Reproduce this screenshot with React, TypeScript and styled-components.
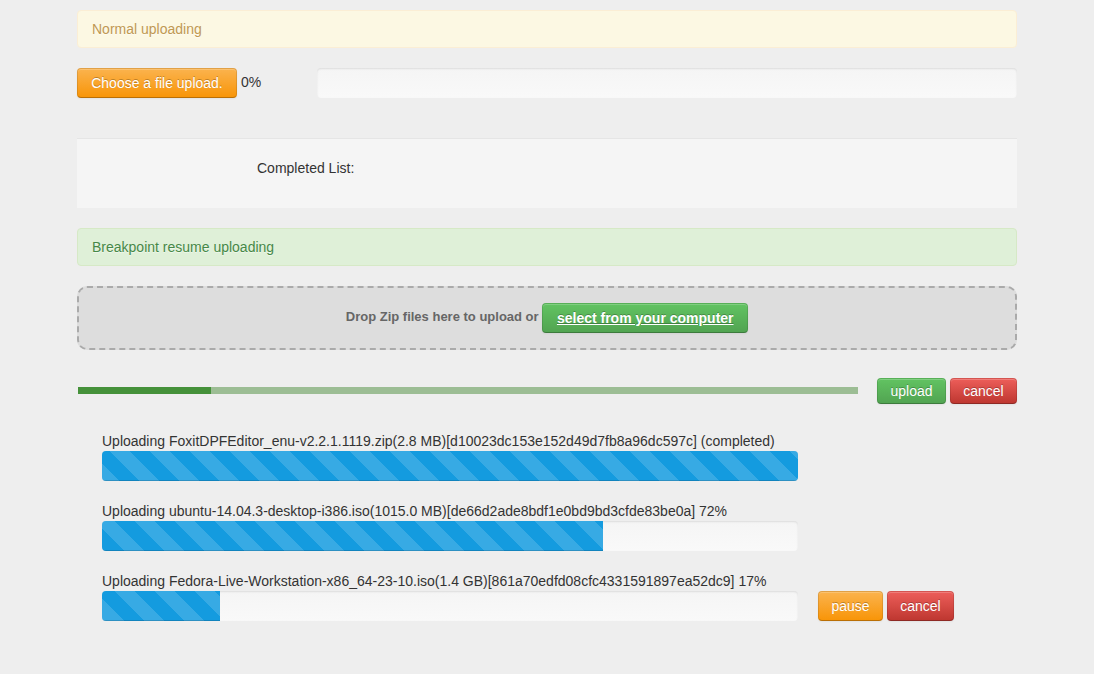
import React from "react";
import styled, { createGlobalStyle, css } from "styled-components";

const GlobalStyle = createGlobalStyle`
  *, *::before, *::after { box-sizing: border-box; }
  body {
    margin: 0;
    background: #eee;
    color: #333;
    font: 14px/20px "Liberation Sans", Arial, sans-serif;
  }
`;

const Page = styled.main`
  display: flex;
  flex-direction: column;
  gap: 20px;
  max-width: 980px;
  margin: 0 auto;
  padding: 10px 20px 20px;
`;

type Tone = "warning" | "success" | "danger";

const alertTones = {
  warning: css`
    color: #c09853;
    background: #fcf8e3;
    border-color: #fbeed5;
  `,
  success: css`
    color: #468847;
    background: #dff0d8;
    border-color: #d6e9c6;
  `,
};

const Alert = styled.div<{ $tone: "warning" | "success" }>`
  padding: 8px 14px;
  border: 1px solid;
  border-radius: 4px;
  text-shadow: 0 1px 0 rgba(255, 255, 255, 0.5);
  ${(p) => alertTones[p.$tone]}
`;

const buttonTones: Record<Tone, string> = {
  warning: "linear-gradient(to bottom, #fbb450, #f89406)",
  success: "linear-gradient(to bottom, #62c462, #51a351)",
  danger: "linear-gradient(to bottom, #ee5f5b, #bd362f)",
};

interface ButtonProps {
  $tone: Tone;
  $small?: boolean;
  $minWidth?: number;
}

const buttonStyle = css<ButtonProps>`
  display: inline-block;
  flex: none;
  min-width: ${(p) => p.$minWidth ?? 0}px;
  padding: ${(p) => (p.$small ? "2px 12px" : "4px 12px")};
  border: 1px solid;
  border-color: rgba(0, 0, 0, 0.1) rgba(0, 0, 0, 0.1) rgba(0, 0, 0, 0.25);
  border-radius: 4px;
  background: ${(p) => buttonTones[p.$tone]} border-box;
  box-shadow: inset 0 1px 0 rgba(255, 255, 255, 0.2), 0 1px 2px rgba(0, 0, 0, 0.05);
  color: #fff;
  font-family: inherit;
  font-size: 14px;
  line-height: 20px;
  text-align: center;
  text-shadow: 0 -1px 0 rgba(0, 0, 0, 0.25);
  vertical-align: middle;
  white-space: nowrap;
  cursor: pointer;
`;

const Button = styled.button<ButtonProps>`
  ${buttonStyle}
`;

const ButtonLink = styled.a<ButtonProps>`
  ${buttonStyle}
  text-decoration: underline;
`;

const ButtonGroup = styled.div`
  display: flex;
  align-items: flex-end;
  gap: 4px;
`;

const UploadRow = styled.section`
  display: grid;
  grid-template-columns: 240px minmax(0, 1fr);
`;

const Track = styled.div`
  height: 30px;
  overflow: hidden;
  border-radius: 4px;
  background: linear-gradient(to bottom, #f5f5f5, #f9f9f9);
  box-shadow: inset 0 1px 2px rgba(0, 0, 0, 0.1);
`;

const StripedFill = styled.div<{ $shift: number }>`
  height: 100%;
  background-color: #149bdf;
  background-image: linear-gradient(
    45deg,
    rgba(255, 255, 255, 0.15) 25%,
    transparent 25%,
    transparent 50%,
    rgba(255, 255, 255, 0.15) 50%,
    rgba(255, 255, 255, 0.15) 75%,
    transparent 75%,
    transparent
  );
  background-size: 40px 40px;
  background-position: ${(p) => p.$shift}px 0;
  box-shadow: inset 0 -1px 0 rgba(0, 0, 0, 0.15);
`;

const CompletedPanel = styled.section`
  min-height: 70px;
  margin-top: 20px;
  padding: 19px 20px 20px 180px;
  border-top: 1px solid #e5e5e5;
  background: #f5f5f5;
`;

const DropZone = styled.section`
  padding: 15px;
  border: 2px dashed #aaa;
  border-radius: 10px;
  background: #ddd;
  color: #666;
  font-size: 13px;
  font-weight: bold;
  text-align: center;
`;

const TotalRow = styled.section`
  display: flex;
  align-items: flex-start;
  gap: 19px;
  margin-top: 8px;
  padding-left: 1px;
`;

const TotalTrack = styled.div`
  flex: 1;
  height: 7px;
  margin-top: 9px;
  background: #9cbd94;
`;

const TotalFill = styled.div`
  height: 100%;
  background: #45913a;
`;

const FileList = styled.ul`
  display: flex;
  flex-direction: column;
  gap: 20px;
  margin: 7px 0 0;
  padding: 0 0 0 25px;
  list-style: none;
`;

const FileItem = styled.li`
  display: grid;
  grid-template-columns: minmax(0, 1fr) 199px;
  gap: 20px;
`;

const FileLabel = styled.div`
  overflow-wrap: anywhere;
`;

interface UploadFile {
  name: string;
  size: string;
  hash: string;
  percent: number;
  shift: number;
  active?: boolean;
}

const files: UploadFile[] = [
  {
    name: "FoxitDPFEditor_enu-v2.2.1.1119.zip",
    size: "2.8 MB",
    hash: "d10023dc153e152d49d7fb8a96dc597c",
    percent: 100,
    shift: 8,
  },
  {
    name: "ubuntu-14.04.3-desktop-i386.iso",
    size: "1015.0 MB",
    hash: "de66d2ade8bdf1e0bd9bd3cfde83be0a",
    percent: 72,
    shift: -7,
  },
  {
    name: "Fedora-Live-Workstation-x86_64-23-10.iso",
    size: "1.4 GB",
    hash: "861a70edfd08cfc4331591897ea52dc9",
    percent: 17,
    shift: 13,
    active: true,
  },
];

function FileUpload({ file }: { file: UploadFile }) {
  const status = file.percent === 100 ? "(completed)" : `${file.percent}%`;
  return (
    <FileItem>
      <div>
        <FileLabel>
          {`Uploading ${file.name}(${file.size})[${file.hash}] ${status}`}
        </FileLabel>
        <Track role="progressbar" aria-label={file.name} aria-valuenow={file.percent}>
          <StripedFill $shift={file.shift} style={{ width: `${file.percent}%` }} />
        </Track>
      </div>
      {file.active && (
        <ButtonGroup>
          <Button type="button" $tone="warning" $minWidth={65}>pause</Button>
          <Button type="button" $tone="danger" $minWidth={67}>cancel</Button>
        </ButtonGroup>
      )}
    </FileItem>
  );
}

export default function App() {
  return (
    <>
      <GlobalStyle />
      <Page>
        <Alert $tone="warning">Normal uploading</Alert>
        <UploadRow>
          <div>
            <Button type="button" $tone="warning" $minWidth={160}>Choose a file upload.</Button>{" "}
            <span>0%</span>
          </div>
          <Track role="progressbar" aria-label="Upload progress" aria-valuenow={0} />
        </UploadRow>
        <CompletedPanel>Completed List:</CompletedPanel>
        <Alert $tone="success">Breakpoint resume uploading</Alert>
        <DropZone>
          Drop Zip files here to upload or{" "}
          <ButtonLink href="#" $tone="success" $minWidth={206}>select from your computer</ButtonLink>
        </DropZone>
        <TotalRow>
          <TotalTrack role="progressbar" aria-label="Total progress" aria-valuenow={17}>
            <TotalFill style={{ width: "17%" }} />
          </TotalTrack>
          <ButtonGroup>
            <Button type="button" $tone="success" $small $minWidth={69}>upload</Button>
            <Button type="button" $tone="danger" $small $minWidth={67}>cancel</Button>
          </ButtonGroup>
        </TotalRow>
        <FileList>
          {files.map((file) => (
            <FileUpload key={file.hash} file={file} />
          ))}
        </FileList>
      </Page>
    </>
  );
}
